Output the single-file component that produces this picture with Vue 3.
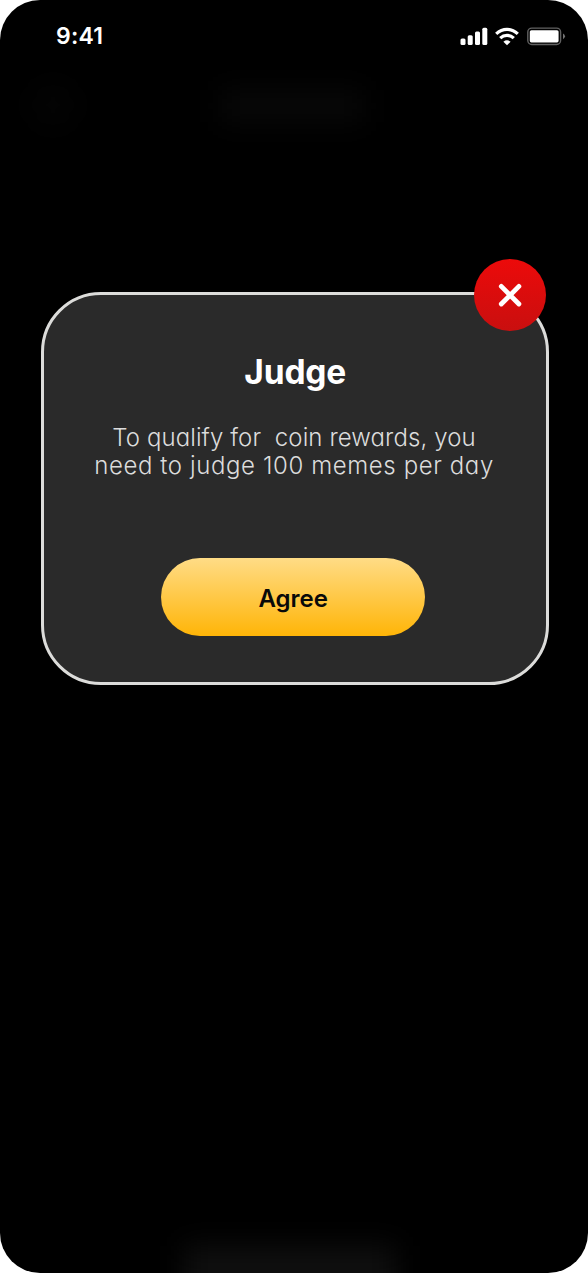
<script setup>
const lines = ['To qualify for  coin rewards, you', 'need to judge 100 memes per day']
</script>

<template>
  <main class="screen">
    <header class="status">
      <span class="time">9:41</span>
      <svg class="indicators" width="106" height="20" viewBox="0 0 106 20">
        <g fill="#fff">
          <rect x="0.5" y="11.5" width="5" height="6.6" rx="1.5" />
          <rect x="7.7" y="8.3" width="5" height="9.8" rx="1.5" />
          <rect x="15" y="4.5" width="5" height="13.6" rx="1.5" />
          <rect x="22.3" y="0.8" width="5" height="17.3" rx="1.5" />
          <path d="M47 18.2 L43.4 14.7 Q47 12 50.6 14.7 Z" />
          <rect x="69.8" y="3.2" width="28.8" height="12.2" rx="1.6" />
          <path opacity=".45" d="M103 6.4 Q105 7.5 105 9.3 Q105 11 103 12.2 Z" />
        </g>
        <g fill="none" stroke="#fff" stroke-width="3.2">
          <path d="M36.2 6.8 Q41 2.3 47 2.3 T57.8 6.8" />
          <path d="M40.2 11.1 Q43.2 8.3 47 8.3 T53.8 11.1" />
        </g>
        <rect x="67.8" y="1.1" width="32.8" height="16.4" rx="4" fill="none" stroke="#fff" stroke-opacity=".38" stroke-width="1.4" />
      </svg>
    </header>
    <i class="haze haze-back"></i>
    <i class="haze haze-title"></i>
    <i class="haze haze-bottom"></i>

    <section class="card">
      <button class="close" aria-label="Close">
        <svg width="72" height="72" viewBox="0 0 72 72">
          <path d="M27.3 27.4 L44.9 45 M44.9 27.4 L27.3 45" fill="none" stroke="#fff" stroke-width="4.8" stroke-linecap="round" />
        </svg>
      </button>
      <h1>Judge</h1>
      <p>
        <span v-for="(line, i) in lines" :key="line" class="line" :class="'line-' + i">{{ line }}</span>
      </p>
      <button class="agree"><span>Agree</span></button>
    </section>
  </main>
</template>

<style>
html,
body {
  margin: 0;
  background: #fff;
}
</style>

<style scoped>
.screen {
  box-sizing: border-box;
  position: relative;
  width: 588px;
  height: 1273.3px;
  overflow: hidden;
  border-radius: 40px;
  background: #000;
  font-family: Inter, "Liberation Sans", sans-serif;
}
.status {
  display: flex;
  justify-content: space-between;
  box-sizing: border-box;
  height: 291.5px;
  padding: 22px 22px 0 56px;
}
.time {
  height: 28px;
  color: #fff;
  font-size: 23px;
  font-weight: 600;
  line-height: 28px;
  letter-spacing: 0.2px;
}
.indicators {
  margin-top: 5px;
}
.haze {
  position: absolute;
  filter: blur(14px);
}
.haze-back {
  left: 32px;
  top: 84px;
  width: 42px;
  height: 42px;
  border-radius: 50%;
  background: #040404;
}
.haze-title {
  left: 220px;
  top: 90px;
  width: 144px;
  height: 32px;
  background: #080808;
}
.haze-bottom {
  left: 184px;
  top: 1246px;
  width: 212px;
  height: 60px;
  background: #0f0f0f;
}
.card {
  position: relative;
  display: flex;
  flex-direction: column;
  align-items: center;
  box-sizing: border-box;
  width: 508px;
  height: 393.5px;
  margin: 0 0 0 40.7px;
  border: 3px solid #dcdcda;
  border-radius: 60px;
  background: #2a2a2a;
}
button {
  padding: 0;
  border: 0;
  font-family: inherit;
}
.close {
  position: absolute;
  left: 430px;
  top: -35.5px;
  width: 72px;
  height: 72px;
  border-radius: 50%;
  background: linear-gradient(#ec0a0a, #c90f0f);
}
.close svg {
  display: block;
}
h1 {
  margin: 56px 0 0 1px;
  color: #fff;
  font-size: 33.5px;
  font-weight: 700;
  line-height: 42px;
  letter-spacing: -0.2px;
}
p {
  display: flex;
  flex-direction: column;
  align-items: center;
  margin: 31px 1.4px 0 0;
  color: #dcdcdc;
  font-size: 24px;
  font-weight: 300;
  line-height: 28px;
  font-feature-settings: "cv11";
}
.line {
  white-space: pre;
}
.line-0 {
  letter-spacing: 0.1px;
}
.line-1 {
  letter-spacing: 0.6px;
}
.agree {
  width: 264px;
  height: 78.5px;
  margin: 78px 3px 0 0;
  border-radius: 40px;
  background: linear-gradient(#ffdc86, #ffb507);
  color: #090909;
  font-size: 24px;
  font-weight: 600;
}
.agree span {
  display: block;
  padding-top: 3px;
}
</style>
